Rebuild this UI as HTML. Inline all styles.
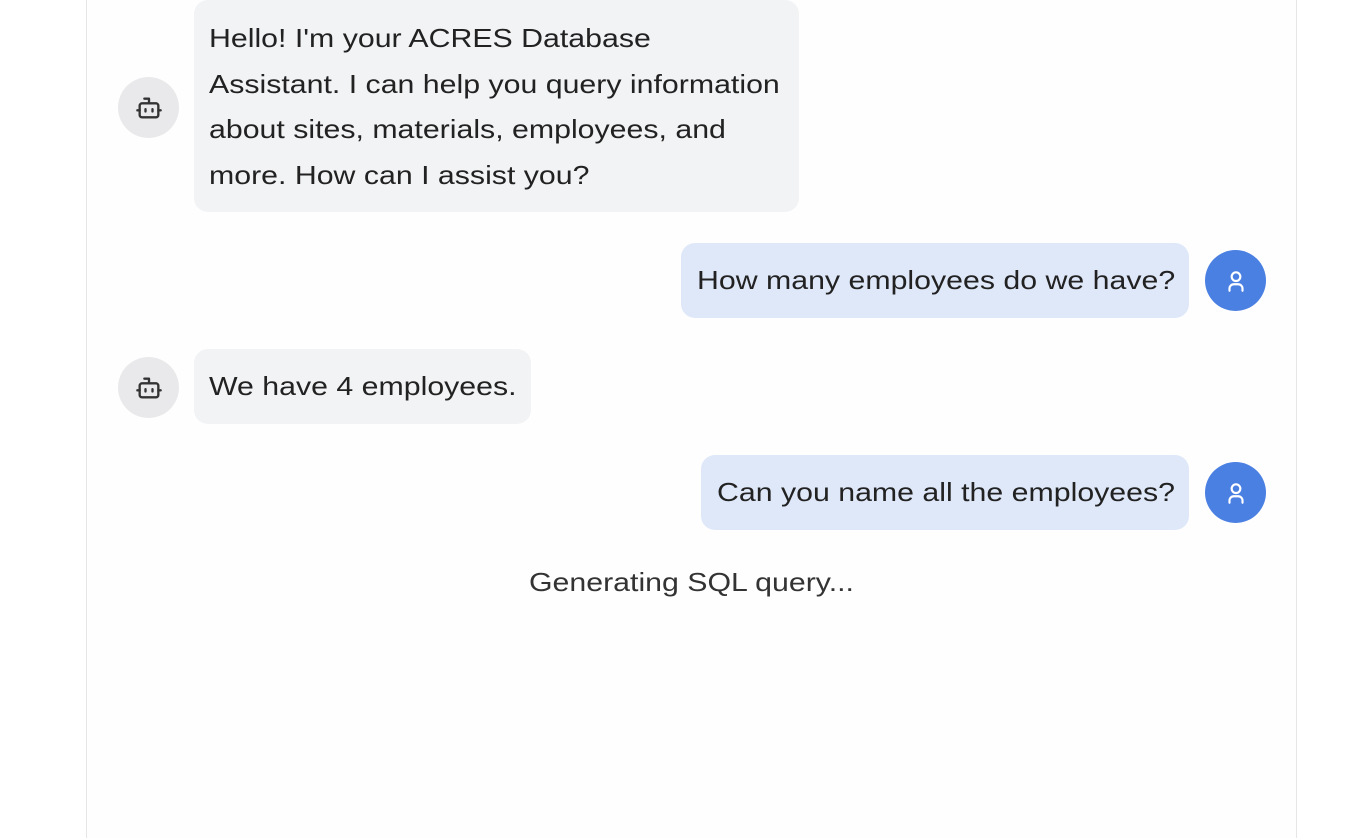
<!DOCTYPE html>
<html><head><meta charset="utf-8"><style>
*{box-sizing:border-box;margin:0;padding:0}
body{width:1354px;height:826px;background:#fff;font-family:"Liberation Sans",sans-serif;position:relative;overflow:hidden;color:#222}
.panel{position:absolute;left:86px;top:-2px;width:1211px;height:840px;border-left:1px solid #e6e6e6;border-right:1px solid #e6e6e6;background:#fefefe}
.b{position:absolute;font-size:26px;line-height:45.5px;border-radius:14px;white-space:nowrap}
.b span,.gen span{display:inline-block;transform:scaleX(1.165);transform-origin:left center}
.bot{background:#f2f3f5;left:194px;padding:16px 15px}
.usr{background:#dfe8f9;padding:15px 16px}
.av{position:absolute;width:61px;height:61px;border-radius:50%;display:flex;align-items:center;justify-content:center}
.ab{background:#e9e9eb;left:118px}
.au{background:#4b80e3;left:1205px}
.gen{position:absolute;top:567px;left:529px;font-size:26px;color:#333;white-space:nowrap}
</style></head><body>
<div class="panel"></div>
<div class="b bot" style="top:0;width:605px;height:212px"><span>Hello! I'm your ACRES Database<br>Assistant. I can help you query information<br>about sites, materials, employees, and<br>more. How can I assist you?</span></div>
<div class="av ab" style="top:77px"><svg width="28" height="28" viewBox="0 0 24 24" fill="none" stroke="#333" stroke-width="2" stroke-linecap="round" stroke-linejoin="round"><path d="M12 8V4H8"/><rect x="4" y="8" width="16" height="12" rx="2"/><path d="M2 14h2M20 14h2M9 13v2M15 13v2"/></svg></div>
<div class="b usr" style="top:243px;left:681px;width:508px;height:75px"><span>How many employees do we have?</span></div>
<div class="av au" style="top:250px"><svg width="26" height="26" viewBox="0 0 24 24" fill="none" stroke="#fff" stroke-width="2" stroke-linecap="round"><circle cx="12" cy="8" r="4"/><path d="M6 21v-2a4 4 0 0 1 4-4h4a4 4 0 0 1 4 4v2"/></svg></div>
<div class="b bot" style="top:349px;width:337px;height:75px;padding:15px 15px"><span>We have 4 employees.</span></div>
<div class="av ab" style="top:357px"><svg width="28" height="28" viewBox="0 0 24 24" fill="none" stroke="#333" stroke-width="2" stroke-linecap="round" stroke-linejoin="round"><path d="M12 8V4H8"/><rect x="4" y="8" width="16" height="12" rx="2"/><path d="M2 14h2M20 14h2M9 13v2M15 13v2"/></svg></div>
<div class="b usr" style="top:455px;left:701px;width:488px;height:75px"><span>Can you name all the employees?</span></div>
<div class="av au" style="top:462px"><svg width="26" height="26" viewBox="0 0 24 24" fill="none" stroke="#fff" stroke-width="2" stroke-linecap="round"><circle cx="12" cy="8" r="4"/><path d="M6 21v-2a4 4 0 0 1 4-4h4a4 4 0 0 1 4 4v2"/></svg></div>
<div class="gen"><span>Generating SQL query...</span></div>
</body></html>
